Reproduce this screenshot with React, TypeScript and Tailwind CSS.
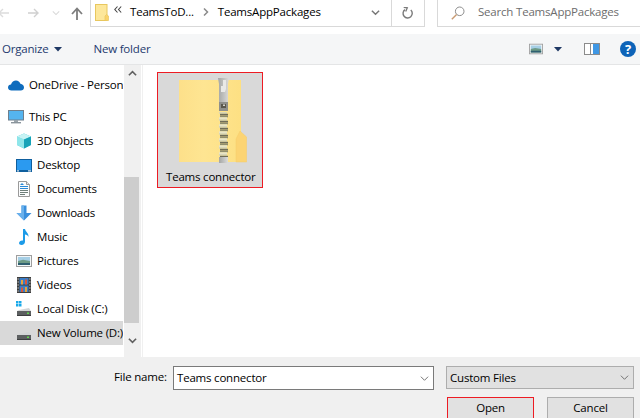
import React from "react";

const FONT = "font-['Open_Sans','Noto_Sans',sans-serif]";

function Chev({ dir = "down", color = "#6b6b6b", size = 10, sw = 1.6 }: { dir?: "down" | "up"; color?: string; size?: number; sw?: number }) {
  return (
    <svg width={size} height={size} viewBox="0 0 10 10">
      <path d={dir === "down" ? "M1 3 L5 7 L9 3" : "M1 7 L5 3 L9 7"} fill="none" stroke={color} strokeWidth={sw} />
    </svg>
  );
}

function Caret() {
  return (
    <svg width="8" height="5" viewBox="0 0 8 5">
      <path d="M0 0H8L4 4.5Z" fill="#1f3864" />
    </svg>
  );
}

function PictureIcon({ w = 14, h = 12 }: { w?: number; h?: number }) {
  return (
    <svg width={w} height={h} viewBox="0 0 16 12">
      <rect x="0.5" y="0.5" width="15" height="11" fill="#f4f7f8" stroke="#9e9e9e" />
      <rect x="2" y="2" width="12" height="4" fill="#a6cfe6" />
      <path d="M2 6 L7 4.8 L14 6 V10 H2Z" fill="#6d9a86" />
      <rect x="2" y="8" width="12" height="2" fill="#2f5f70" />
    </svg>
  );
}

function DriveIcon({ win }: { win?: boolean }) {
  return (
    <svg width="16" height="16" viewBox="0 0 16 16">
      {win && (
        <g fill="#18a9ea">
          <rect x="0" y="0" width="2.5" height="2.5" />
          <rect x="3" y="0" width="2.5" height="2.5" />
          <rect x="0" y="3" width="2.5" height="2.5" />
          <rect x="3" y="3" width="2.5" height="2.5" />
        </g>
      )}
      <path d="M3 9 L13 7 L15 10 H1Z" fill="#d3d5d6" />
      <rect x="1" y="10" width="14" height="5" fill="#5c5f60" />
      <rect x="1" y="14" width="14" height="1" fill="#3c3e3f" />
      <rect x="11" y="11.5" width="2" height="1.5" fill="#61d84f" />
    </svg>
  );
}

const navIcons: Record<string, React.ReactNode> = {
  "3D Objects": (
    <svg width="16" height="16" viewBox="0 0 16 16">
      <path d="M8 0.5 L15 3.5 V12 L8 15.5 L1 12 V3.5Z" fill="#3fc9d6" />
      <path d="M1 3.5 L8 6.5 V15.5 L1 12Z" fill="#8fe6ea" />
      <path d="M8 0.5 L15 3.5 L8 6.5 L1 3.5Z" fill="#c8f3f4" />
      <path d="M8 6.5 L15 3.5 V12 L8 15.5Z" fill="#17a3b8" />
    </svg>
  ),
  Desktop: (
    <svg width="16" height="13" viewBox="0 0 16 13">
      <rect x="0" y="0" width="16" height="13" fill="#0f5f9e" />
      <rect x="1" y="1" width="14" height="10" fill="#2b9af0" />
      <rect x="1" y="11.4" width="2" height="1" fill="#ffffff" />
      <rect x="12" y="11.4" width="3" height="1" fill="#ffffff" />
    </svg>
  ),
  Documents: (
    <svg width="16" height="16" viewBox="0 0 16 16">
      <path d="M2.5 0.5 H10.5 L13.5 3.5 V15.5 H2.5Z" fill="#fbfcfd" stroke="#9a9a9a" />
      <path d="M10.5 0.5 V3.5 H13.5" fill="#e6e6e6" stroke="#9a9a9a" />
      <path d="M6 2 L8 4 H4Z" fill="#2b8ad8" />
      <path d="M4 5.5 H12M4 7.5 H12" stroke="#2b8ad8" />
      <path d="M4 9.5 H12M4 11.5 H12M4 13.5 H9" stroke="#6f7f7a" />
    </svg>
  ),
  Downloads: (
    <svg width="16" height="16" viewBox="0 0 16 16">
      <path d="M5.5 0.5 H10.5 V8 H15.5 L8 15.5 L0.5 8 H5.5Z" fill="#3a8fdc" />
      <path d="M5.5 0.5 H8 V15.5 L0.5 8 H5.5Z" fill="#68b0ec" />
    </svg>
  ),
  Music: (
    <svg width="16" height="16" viewBox="0 0 16 16">
      <path d="M7 0 H9 C9.5 3 13 4 12.5 8 C12 6.5 10.5 5.5 9 5.5 V12.5 C9 14.5 7.5 16 5.5 16 C4 16 3 15 3 14 C3 12.5 5 11 7 11.5Z" fill="#1d9be8" />
    </svg>
  ),
  Pictures: <PictureIcon w={16} h={12} />,
  Videos: (
    <svg width="14" height="16" viewBox="0 0 14 16">
      <rect width="14" height="16" fill="#3d3d3d" />
      <rect x="2.5" y="1" width="9" height="6.5" fill="#3a7ec8" />
      <rect x="2.5" y="8.5" width="9" height="6.5" fill="#3a7ec8" />
      <rect x="4" y="3" width="2" height="4.5" fill="#e6a23c" />
      <rect x="8" y="2.5" width="2" height="5" fill="#d9573c" />
      <rect x="4" y="10.5" width="2" height="4.5" fill="#d9573c" />
      <rect x="8" y="10" width="2" height="5" fill="#e6a23c" />
      <g fill="#fff">
        <rect x="0.6" y="1.5" width="1" height="1" />
        <rect x="0.6" y="4.5" width="1" height="1" />
        <rect x="0.6" y="7.5" width="1" height="1" />
        <rect x="0.6" y="10.5" width="1" height="1" />
        <rect x="0.6" y="13.5" width="1" height="1" />
        <rect x="12.4" y="1.5" width="1" height="1" />
        <rect x="12.4" y="4.5" width="1" height="1" />
        <rect x="12.4" y="7.5" width="1" height="1" />
        <rect x="12.4" y="10.5" width="1" height="1" />
        <rect x="12.4" y="13.5" width="1" height="1" />
      </g>
    </svg>
  ),
  "Local Disk (C:)": <DriveIcon win />,
  "New Volume (D:)": <DriveIcon />,
};

const navItems = ["3D Objects", "Desktop", "Documents", "Downloads", "Music", "Pictures", "Videos", "Local Disk (C:)", "New Volume (D:)"];

function SmallFolder() {
  return (
    <svg width="14" height="17" viewBox="0 0 14 17">
      <rect x="0.5" y="0.5" width="11.5" height="16" fill="#fde79a" stroke="#e8c75e" />
      <path d="M10 12 L11.5 10.5 L13.5 12 V16.5 H10Z" fill="#fbd36b" stroke="#e8c75e" strokeWidth="0.7" />
    </svg>
  );
}

function ZipFolder() {
  const teeth = Array.from({ length: 13 }, (_, i) => i);
  return (
    <svg width="68" height="86" viewBox="0 0 68 86">
      <defs>
        <linearGradient id="zf" x1="0" y1="0" x2="1" y2="0">
          <stop offset="0" stopColor="#fde08a" />
          <stop offset="0.4" stopColor="#fee592" />
          <stop offset="1" stopColor="#fde083" />
        </linearGradient>
        <linearGradient id="sl" x1="0" y1="0" x2="1" y2="0">
          <stop offset="0" stopColor="#a4a6a4" />
          <stop offset="0.5" stopColor="#bfc0be" />
          <stop offset="1" stopColor="#dcdcda" />
        </linearGradient>
      </defs>
      <rect x="0" y="2" width="62" height="82" fill="url(#zf)" />
      <path d="M57 61 L61 53 L67.6 59 V84 H57Z" fill="#fcd473" />
      <path d="M57 61 L61 53 L67.6 59 V84 H57Z" fill="none" stroke="#f6cd69" strokeWidth="0.5" />
      <path d="M39 0 H50 L49 6 V30 H40 V6Z" fill="url(#sl)" />
      <path d="M42 8 H44 V2 H47 V11 L46 14 H42Z" fill="#e9e9e7" />
      <rect x="40" y="24" width="9" height="9" fill="#8e8f8b" />
      <rect x="42" y="26" width="5" height="4" fill="#5a584d" />
      <rect x="44" y="26.5" width="2" height="1.5" fill="#d4d4cf" />
      {teeth.map((i) => (
        <g key={i}>
          <rect x={i % 2 ? 41 : 40} y={34 + i * 3.5} width="8" height="1.8" fill={i % 2 ? "#8f8d6e" : "#d9d6b6"} />
          <rect x={i % 2 ? 40 : 41} y={35.8 + i * 3.5} width="8" height="1.7" fill={i % 2 ? "#e7e4c8" : "#6f6d58"} />
        </g>
      ))}
      <rect x="40" y="79" width="9" height="6" fill="url(#sl)" />
    </svg>
  );
}

export default function App() {
  return (
    <div className={`${FONT} w-[640px] h-[418px] overflow-hidden bg-white text-[11.5px] tracking-[-0.2px] leading-[16px] text-black flex flex-col`}>
      {/* address row */}
      <div className="h-[34px] flex items-start shrink-0 bg-white">
        <div className="w-[90px] h-[26px] flex items-center shrink-0">
          <svg width="12" height="12" viewBox="0 0 12 12" className="ml-[-2px]">
            <path d="M11 6H1M5 2L1 6L5 10" fill="none" stroke="#dcdcdc" strokeWidth="1.4" />
          </svg>
          <svg width="12" height="12" viewBox="0 0 12 12" className="ml-[17px]">
            <path d="M1 6H11M7 2L11 6L7 10" fill="none" stroke="#d0d0d0" strokeWidth="1.4" />
          </svg>
          <span className="ml-[13px] flex"><Chev color="#d8d8d8" size={8} sw={1.3} /></span>
          <svg width="14" height="14" viewBox="0 0 14 14" className="ml-[10px] mt-[1px]">
            <path d="M7 13V2M2 7L7 1.5L12 7" fill="none" stroke="#7d7d7d" strokeWidth="1.8" />
          </svg>
        </div>
        <div className="w-[335px] h-[27px] border-l border-r border-b border-[#d9d9d9] flex items-center shrink-0">
          <div className="ml-[4px] flex mt-[-2px]"><SmallFolder /></div>
          <svg width="8" height="7" viewBox="0 0 8 7" className="ml-[5px] mt-[-7px]">
            <path d="M3.5 0.5L0.8 3.5L3.5 6.5M7.2 0.5L4.5 3.5L7.2 6.5" fill="none" stroke="#444" strokeWidth="1.1" />
          </svg>
          <span className="ml-[8px] mt-[-2px]">TeamsToD...</span>
          <span className="ml-[9px] mt-[-2px] flex">
            <svg width="6" height="8" viewBox="0 0 6 8"><path d="M1 0.5L4.5 4L1 7.5" fill="none" stroke="#8a8a8a" strokeWidth="1.5" /></svg>
          </span>
          <span className="ml-[9px] mt-[-2px]">TeamsAppPackages</span>
          <span className="ml-auto flex mr-[11px] mt-[-1px]"><Chev color="#777" size={9} /></span>
          <div className="w-[33px] h-full border-l border-[#d9d9d9] flex items-center justify-center pr-[1px]">
            <svg width="13" height="13" viewBox="0 0 13 13">
              <path d="M9.8 3 A4.6 4.6 0 1 1 4 2.6" fill="none" stroke="#7a7a7a" strokeWidth="1.4" />
              <path d="M2.7 0.3 L6.3 0.8 L4.7 4.5" fill="none" stroke="#7a7a7a" strokeWidth="1.3" />
            </svg>
          </div>
        </div>
        <div className="w-[12px] shrink-0" />
        <div className="flex-1 h-[27px] border-l border-b border-[#d9d9d9] flex items-center pl-[13px]">
          <svg width="14" height="14" viewBox="0 0 14 14" className="mt-[-1px]">
            <circle cx="8.7" cy="5.3" r="4.3" fill="none" stroke="#8d8d8d" />
            <path d="M5.6 8.4 L0.8 13.2" stroke="#c89a72" strokeWidth="1.4" />
          </svg>
          <span className="ml-[13px] text-[#6d6d6d] mt-[-2px]">Search TeamsAppPackages</span>
        </div>
      </div>

      {/* toolbar */}
      <div className="h-[31px] bg-[#f5f6f7] border-b border-[#e4e5e6] flex items-center shrink-0 pl-[2px] pr-[4px] text-[#1e3a6e]">
        <span>Organize</span>
        <span className="ml-[6px] flex"><Caret /></span>
        <span className="ml-[31px]">New folder</span>
        <span className="ml-auto flex"><PictureIcon /></span>
        <span className="ml-[11px] flex"><Caret /></span>
        <svg width="16" height="12" viewBox="0 0 16 12" className="ml-[22px]">
          <rect x="0.5" y="0.5" width="15" height="11" fill="#fff" stroke="#8b8b8b" />
          <rect x="9" y="1" width="6" height="10" fill="#3f97e4" />
          <rect x="6" y="1" width="1" height="10" fill="#8b8b8b" />
        </svg>
        <span className="ml-[20px] w-[16px] h-[16px] rounded-full bg-[#0d63b8] text-white text-[13px] font-bold flex items-center justify-center leading-none">?</span>
      </div>

      {/* main */}
      <div className="flex-1 flex min-h-0">
        <div className="w-[123px] shrink-0 overflow-hidden flex flex-col pt-[8px]">
          <div className="h-[24px] flex items-center pl-[8px] whitespace-nowrap">
            <svg width="16" height="11" viewBox="0 0 16 11" className="shrink-0">
              <path d="M3.5 10.5 C1.5 10.5 0 9.2 0 7.5 C0 5.8 1.4 4.6 3 4.6 C3.8 2 5.8 0.5 8 0.5 C10.2 0.5 11.8 1.8 12.4 3.8 C14.5 4 16 5.6 16 7.4 C16 9.2 14.6 10.5 12.8 10.5Z" fill="#0f6cbd" />
            </svg>
            <span className="ml-[5px]">OneDrive - Personal</span>
          </div>
          <div className="h-[8px] shrink-0" />
          <div className="h-[24px] flex items-center pl-[8px]">
            <svg width="16" height="14" viewBox="0 0 16 14">
              <rect x="0.5" y="0.5" width="15" height="9.5" fill="#55b4ef" stroke="#6f7f8c" />
              <rect x="6" y="10" width="4" height="2" fill="#9aa4ab" />
              <rect x="3" y="12" width="10" height="1.4" fill="#8a949b" />
            </svg>
            <span className="ml-[5px]">This PC</span>
          </div>
          {navItems.map((name) => (
            <div key={name} className={`h-[24px] shrink-0 flex items-center pl-[16px] whitespace-nowrap ${name.startsWith("New") ? "bg-[#d9d9d9]" : ""}`}>
              <span className="w-[16px] flex justify-center shrink-0">{navIcons[name]}</span>
              <span className="ml-[5px]">{name}</span>
            </div>
          ))}
        </div>

        <div className="w-[17px] ml-[1px] shrink-0 bg-[#f0f0f0] flex flex-col">
          <div className="h-[17px] flex items-center justify-center pr-[1px]"><Chev dir="up" color="#606060" size={9} sw={1.8} /></div>
          <div className="h-[95px]" />
          <div className="h-[146px] w-[15px] bg-[#cdcdcd]" />
          <div className="flex-1 flex items-center justify-center pr-[1px]"><Chev color="#606060" size={9} sw={1.8} /></div>
        </div>
        <div className="w-[1px] shrink-0" />
        <div className="w-[1px] shrink-0 bg-[#f0f0f0]" />

        <div className="flex-1 pl-[14px] pt-[7px] min-w-0">
          <div className="w-[106px] h-[116px] bg-[#d9d9d9] border border-[#ed1c24] flex flex-col items-start">
            <div className="mt-[5px] ml-[21px] flex"><ZipFolder /></div>
            <span className="mt-[5px] ml-[8px] whitespace-nowrap">Teams connector</span>
          </div>
        </div>
      </div>

      {/* footer */}
      <div className="h-[61px] bg-[#f0f0f0] shrink-0 pt-[9px] pl-[114px] pr-[6px]">
        <div className="flex items-start">
          <span className="mt-[3px] w-[59px] shrink-0 whitespace-nowrap">File name:</span>
          <div className="w-[261px] h-[24px] bg-white border border-[#7a7a7a] flex items-center pl-[3px] shrink-0">
            <span>Teams connector</span>
            <span className="ml-auto mr-[4px] flex"><Chev color="#666" size={9} sw={1} /></span>
          </div>
          <div className="ml-[12px] flex-1 h-[23px] bg-[#e1e1e1] border border-[#adadad] flex items-center pl-[3px]">
            <span>Custom Files</span>
            <span className="ml-auto mr-[4px] flex"><Chev color="#666" size={9} sw={1} /></span>
          </div>
        </div>
        <div className="flex mt-[7px] ml-[333px]">
          <div className="w-[87px] h-[30px] bg-[#e1e1e1] border border-[#ed1c24] flex justify-center pt-[2px]">
            <span>Open</span>
          </div>
          <div className="ml-[13px] w-[87px] h-[30px] bg-[#e1e1e1] border border-[#adadad] flex justify-center pt-[2px]">
            <span>Cancel</span>
          </div>
        </div>
      </div>
    </div>
  );
}
